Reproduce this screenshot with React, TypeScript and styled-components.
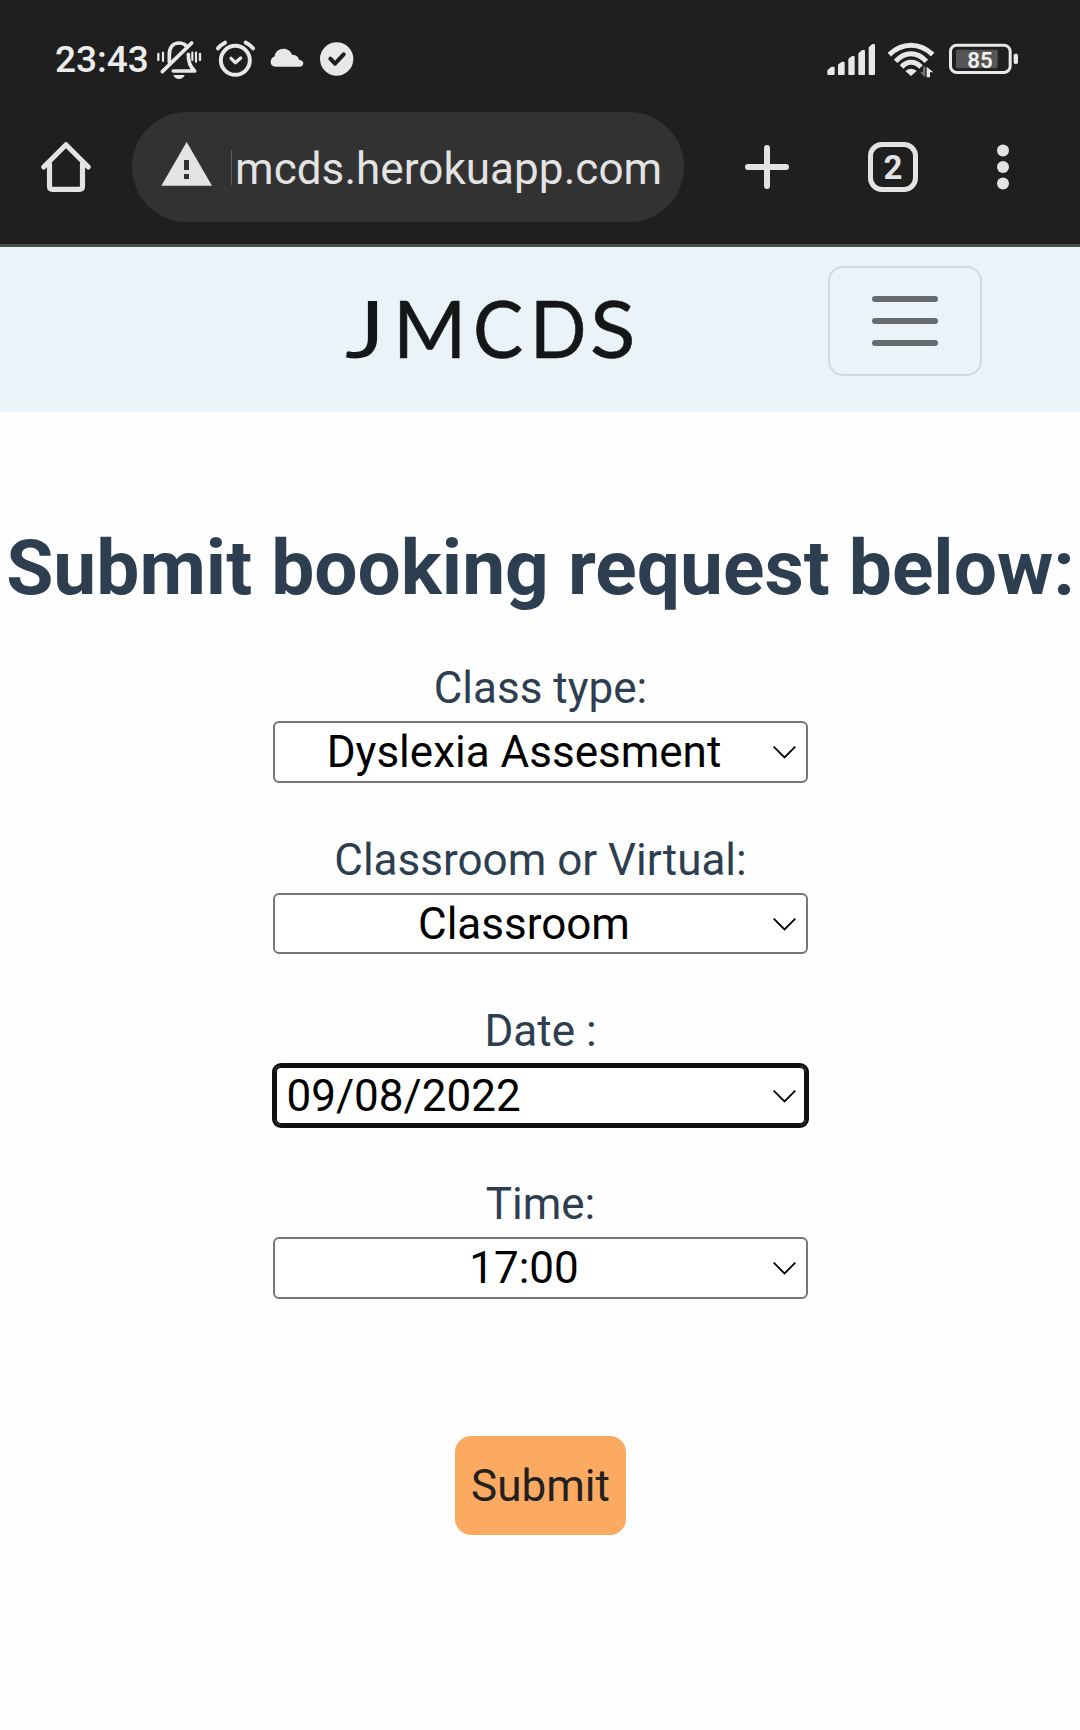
import React from 'react';
import styled, { createGlobalStyle } from 'styled-components';

const GlobalStyle = createGlobalStyle`
  *, *::before, *::after { box-sizing: border-box; }
  body {
    margin: 0;
    background: #fefefe;
    font-family: Roboto, 'Liberation Sans', sans-serif;
    font-size: 44px;
    line-height: 66px;
  }
`;

const Screen = styled.div`
  width: 1080px;
  min-height: 1730px;
  background: #fefefe;
`;

const Chrome = styled.header`
  height: 247px;
  background: #1f1f1f;
  border-bottom: 3px solid #4a4d4e;
  color: #e3e3e3;
`;

const StatusBar = styled.div`
  display: flex;
  justify-content: space-between;
  height: 112px;
  padding: 38px 59px 0 55px;
`;

const StatusGroup = styled.div<{ $gap: number }>`
  display: flex;
  align-items: center;
  gap: ${(p) => p.$gap}px;
  height: 42px;
`;

const Clock = styled.span`
  width: 88px;
  font-size: 37px;
  font-weight: 500;
  line-height: 42px;
  white-space: nowrap;
  color: #ececec;
  padding-top: 2px;
`;

const Glyph = styled.svg<{ $w: number; $h: number }>`
  display: block;
  flex: none;
  width: ${(p) => p.$w}px;
  height: ${(p) => p.$h}px;
`;

const Toolbar = styled.div`
  display: flex;
  align-items: center;
  height: 110px;
  padding-left: 40px;
`;

const AddressBar = styled.div`
  display: flex;
  align-items: center;
  width: 552px;
  height: 110px;
  margin: 0 61px 0 40px;
  padding-left: 28px;
  border-radius: 55px;
  background: #323232;
`;

const Url = styled.span`
  margin-left: 17px;
  padding: 4px 0 0 4px;
  font-size: 44px;
  line-height: 60px;
  letter-spacing: 0.06px;
  white-space: nowrap;
  background: linear-gradient(#5c5c5c, #5c5c5c) 0 15px / 1px 35px no-repeat;
`;

const TabCount = styled.span`
  display: flex;
  align-items: center;
  justify-content: center;
  width: 50px;
  height: 50px;
  margin: 0 79px;
  border: 5.5px solid #e3e3e3;
  border-radius: 14px;
  font-size: 33px;
  font-weight: 700;
  line-height: 39px;
`;

const NavBar = styled.nav`
  display: flex;
  align-items: flex-start;
  justify-content: space-between;
  height: 165px;
  padding: 19px 98px 0 345px;
  background: #e9f3f8;
`;

const Brand = styled.span`
  display: flex;
  padding-top: 14px;
  font-family: Lato, 'Open Sans', sans-serif;
  font-size: 79px;
  line-height: 96px;
  color: #141718;
`;

const BrandLetter = styled.span<{ $w: number; $stretch: number; $stroke: number }>`
  width: ${(p) => p.$w}px;
  transform: scaleX(${(p) => p.$stretch});
  transform-origin: left;
  -webkit-text-stroke: ${(p) => p.$stroke}px #141718;
`;

const Toggler = styled.button`
  display: flex;
  flex-direction: column;
  align-items: center;
  justify-content: center;
  gap: 16px;
  width: 154px;
  height: 110px;
  padding: 0;
  border: 2px solid #d0d8e0;
  border-radius: 15px;
  background: transparent;
`;

const TogglerBar = styled.span`
  width: 66px;
  height: 6px;
  border-radius: 3px;
  background: #666c6e;
`;

const Main = styled.main`
  display: flex;
  flex-direction: column;
  align-items: center;
  padding-top: 110px;
`;

const Title = styled.h1`
  margin: 0 0 41px;
  padding-left: 1px;
  font-size: 76.7px;
  font-weight: 700;
  line-height: 92px;
  white-space: nowrap;
  color: #2c3e50;
`;

const Form = styled.form`
  display: flex;
  flex-direction: column;
  align-items: center;
`;

const Field = styled.div<{ $gap: number }>`
  display: flex;
  flex-direction: column;
  align-items: center;
  margin-bottom: ${(p) => p.$gap}px;
`;

const Label = styled.label`
  padding-left: 1px;
  color: #2c3e50;
`;

const Picker = styled.button<{ $focused?: boolean; $align?: string; $h: number }>`
  display: flex;
  align-items: center;
  width: 535px;
  height: ${(p) => p.$h}px;
  padding: 0 10px 0 ${(p) => (p.$align === 'left' ? 12 : 1)}px;
  border: 2px solid ${(p) => (p.$focused ? '#101010' : '#767676')};
  border-radius: ${(p) => (p.$focused ? 8 : 6)}px;
  outline: none;
  background: #fff;
  font: inherit;
  line-height: ${(p) => (p.$h === 61 ? 56 : 58)}px;
  color: #000;
  text-align: ${(p) => p.$align ?? 'center'};
  box-shadow: ${(p) => (p.$focused ? 'inset 0 0 0 2px #101010, 0 0 0 1px #101010' : 'none')};
`;

const PickerValue = styled.span`
  flex: 1;
  white-space: nowrap;
`;

const Submit = styled.button`
  width: 171px;
  height: 99px;
  margin-top: 93px;
  padding: 0 0 0 1px;
  border: 0;
  border-radius: 16px;
  background: #fca962;
  font: inherit;
  color: #212121;
`;

const INK = '#e8e8e8';

const MutedBell = () => (
  <Glyph $w={48} $h={42} viewBox="345 54 144 126" fill="none" stroke={INK} strokeLinecap="round">
    <path d="M388 127V104c0-23 12-35 29-35 10 0 17 3 22 9" strokeWidth="11" />
    <path d="M445 103c0 25 5 36 19 50H400" strokeWidth="11" strokeLinejoin="round" />
    <path d="M367 155L455 69" strokeWidth="11" />
    <path d="M400 165h34c-3 8-9 12-17 12s-14-4-17-12z" fill={INK} stroke="none" />
    <path d="M355 102v18M480 102v18" strokeWidth="7" />
    <path d="M369 98v25M457 98v22M468 98v27" strokeWidth="6.500" />
  </Glyph>
);

const Alarm = () => (
  <Glyph $w={42} $h={42} viewBox="525 54 126 126" fill="none" stroke={INK} strokeLinecap="round">
    <circle cx="586" cy="121" r="43.500" strokeWidth="12" />
    <path d="M534 85Q543 74 555 68M617 68Q630 74 639 85" strokeWidth="12" />
    <path d="M573 115l13 13 16-14" strokeWidth="10" strokeLinejoin="round" />
  </Glyph>
);

const Cloud = () => (
  <Glyph $w={36} $h={42} viewBox="687 54 108 126" fill={INK}>
    <path d="M707 140c-9 0-15-6-15-14 0-9 6-15 12-17 1-14 13-23 27-23 12 0 21 7 25 18 12-1 19 6 21 15 8 1 13 5 13 11 0 7-5 10-11 10z" />
  </Glyph>
);

const CheckBadge = () => (
  <Glyph $w={39} $h={42} viewBox="831 54 117 126" fill="none">
    <circle cx="890" cy="117" r="50" fill={INK} />
    <path d="M871 116l14 15 26-28" stroke="#1f1f1f" strokeWidth="12" strokeLinecap="round" strokeLinejoin="round" />
  </Glyph>
);

const Signal = () => (
  <Glyph $w={52} $h={42} viewBox="45 54 156 126" fill={INK} stroke={INK} strokeWidth="6" strokeLinejoin="round">
    <path d="M55 152l10-9h6v19H55zM87 135l10-7h4v34H87zM118 118l9-7h4v51h-13zM148 101l9-8h5v69h-14zM179 83l9-8h4v87h-13z" />
  </Glyph>
);

const Wifi = () => (
  <Glyph $w={54} $h={42} viewBox="225 54 162 126" fill="none" stroke={INK} strokeWidth="15">
    <path d="M238 104Q267 76 303 76t65 28" />
    <path d="M257 124Q278 101 303 101t46 23" />
    <path d="M275 141Q287 127 303 127t30 14" />
    <path d="M286 153q17-14 34 0l-17 15z" fill={INK} stroke="none" />
    <path d="M339 140h7v32l-16-15h9z" fill="#777" stroke="none" />
    <path d="M350 172v-32l20 17h-10v15z" fill={INK} stroke="none" />
  </Glyph>
);

const Battery = () => (
  <Glyph $w={74} $h={42} viewBox="411 54 222 126">
    <rect x="421.500" y="75.500" width="179" height="82" rx="19" fill="none" stroke={INK} strokeWidth="9" />
    <rect x="438" y="89" width="125" height="56" rx="4" fill="#555" />
    <rect x="611" y="101" width="13" height="31" rx="5" fill={INK} />
    <text x="510" y="143" textAnchor="middle" fontFamily="Roboto, sans-serif" fontWeight="600" fontSize="67" fill="#f0f0f0">85</text>
  </Glyph>
);

const Home = () => (
  <Glyph $w={52} $h={54} viewBox="60 120 156 162" fill="none" stroke="#e3e3e3" strokeLinecap="round" strokeLinejoin="round">
    <path d="M71 201L138 134l67 67" strokeWidth="15" />
    <path d="M88.500 192v67q0 9 9 9h81q9 0 9-9v-67" strokeWidth="15.500" />
  </Glyph>
);

const Warning = () => (
  <Glyph $w={54} $h={54} viewBox="420 120 162 162">
    <path d="M500 126L576 257H424z" fill="#e3e3e3" />
    <path d="M492 180h15v30h-15zM492 222h15v15h-15z" fill="#323232" />
  </Glyph>
);

const Plus = () => (
  <Glyph $w={44} $h={44} viewBox="0 0 44 44" stroke="#e3e3e3" strokeWidth="6" strokeLinecap="round">
    <path d="M22 3v38M3 22h38" />
  </Glyph>
);

const More = () => (
  <Glyph $w={12} $h={46} viewBox="0 0 12 46" fill="#e3e3e3">
    <circle cx="6" cy="6.500" r="6" />
    <circle cx="6" cy="23" r="6" />
    <circle cx="6" cy="39.500" r="6" />
  </Glyph>
);

const Chevron = () => (
  <Glyph $w={23} $h={14} viewBox="0 0 23 14" fill="none" stroke="#000" strokeWidth="1.800">
    <path d="M0.700 1.700L11.500 12.500 22.300 1.700" />
  </Glyph>
);

const brand = [
  { letter: 'J', w: 48, stretch: 1.2, stroke: 0 },
  { letter: 'M', w: 80, stretch: 1, stroke: 0.6 },
  { letter: 'C', w: 57, stretch: 0.95, stroke: 0.6 },
  { letter: 'D', w: 60, stretch: 0.94, stroke: 0.6 },
  { letter: 'S', w: 44, stretch: 1.06, stroke: 0.6 },
];

const fields = [
  { id: 'type', label: 'Class type:', value: 'Dyslexia Assesment', height: 62, gap: 44 },
  { id: 'place', label: 'Classroom or Virtual:', value: 'Classroom', height: 61, gap: 44 },
  { id: 'date', label: 'Date :', value: '09/08/2022', align: 'left', focused: true, height: 63, gap: 44 },
  { id: 'time', label: 'Time:', value: '17:00', height: 62, gap: 44 },
];

export default function App() {
  return (
    <Screen>
      <GlobalStyle />
      <Chrome>
        <StatusBar>
          <StatusGroup $gap={12}>
            <Clock>23:43</Clock>
            <MutedBell />
            <Alarm />
            <Cloud />
            <CheckBadge />
          </StatusGroup>
          <StatusGroup $gap={8}>
            <Signal />
            <Wifi />
            <Battery />
          </StatusGroup>
        </StatusBar>
        <Toolbar>
          <Home />
          <AddressBar>
            <Warning />
            <Url>mcds.herokuapp.com</Url>
          </AddressBar>
          <Plus />
          <TabCount>2</TabCount>
          <More />
        </Toolbar>
      </Chrome>
      <NavBar>
        <Brand>
          {brand.map((b) => (
            <BrandLetter key={b.letter} $w={b.w} $stretch={b.stretch} $stroke={b.stroke}>
              {b.letter}
            </BrandLetter>
          ))}
        </Brand>
        <Toggler type="button" aria-label="Menu">
          <TogglerBar />
          <TogglerBar />
          <TogglerBar />
        </Toggler>
      </NavBar>
      <Main>
        <Title>Submit booking request below:</Title>
        <Form>
          {fields.map((f) => (
            <Field key={f.id} $gap={f.gap}>
              <Label htmlFor={f.id}>{f.label}</Label>
              <Picker id={f.id} type="button" $align={f.align} $focused={f.focused} $h={f.height}>
                <PickerValue>{f.value}</PickerValue>
                <Chevron />
              </Picker>
            </Field>
          ))}
          <Submit type="button">Submit</Submit>
        </Form>
      </Main>
    </Screen>
  );
}
